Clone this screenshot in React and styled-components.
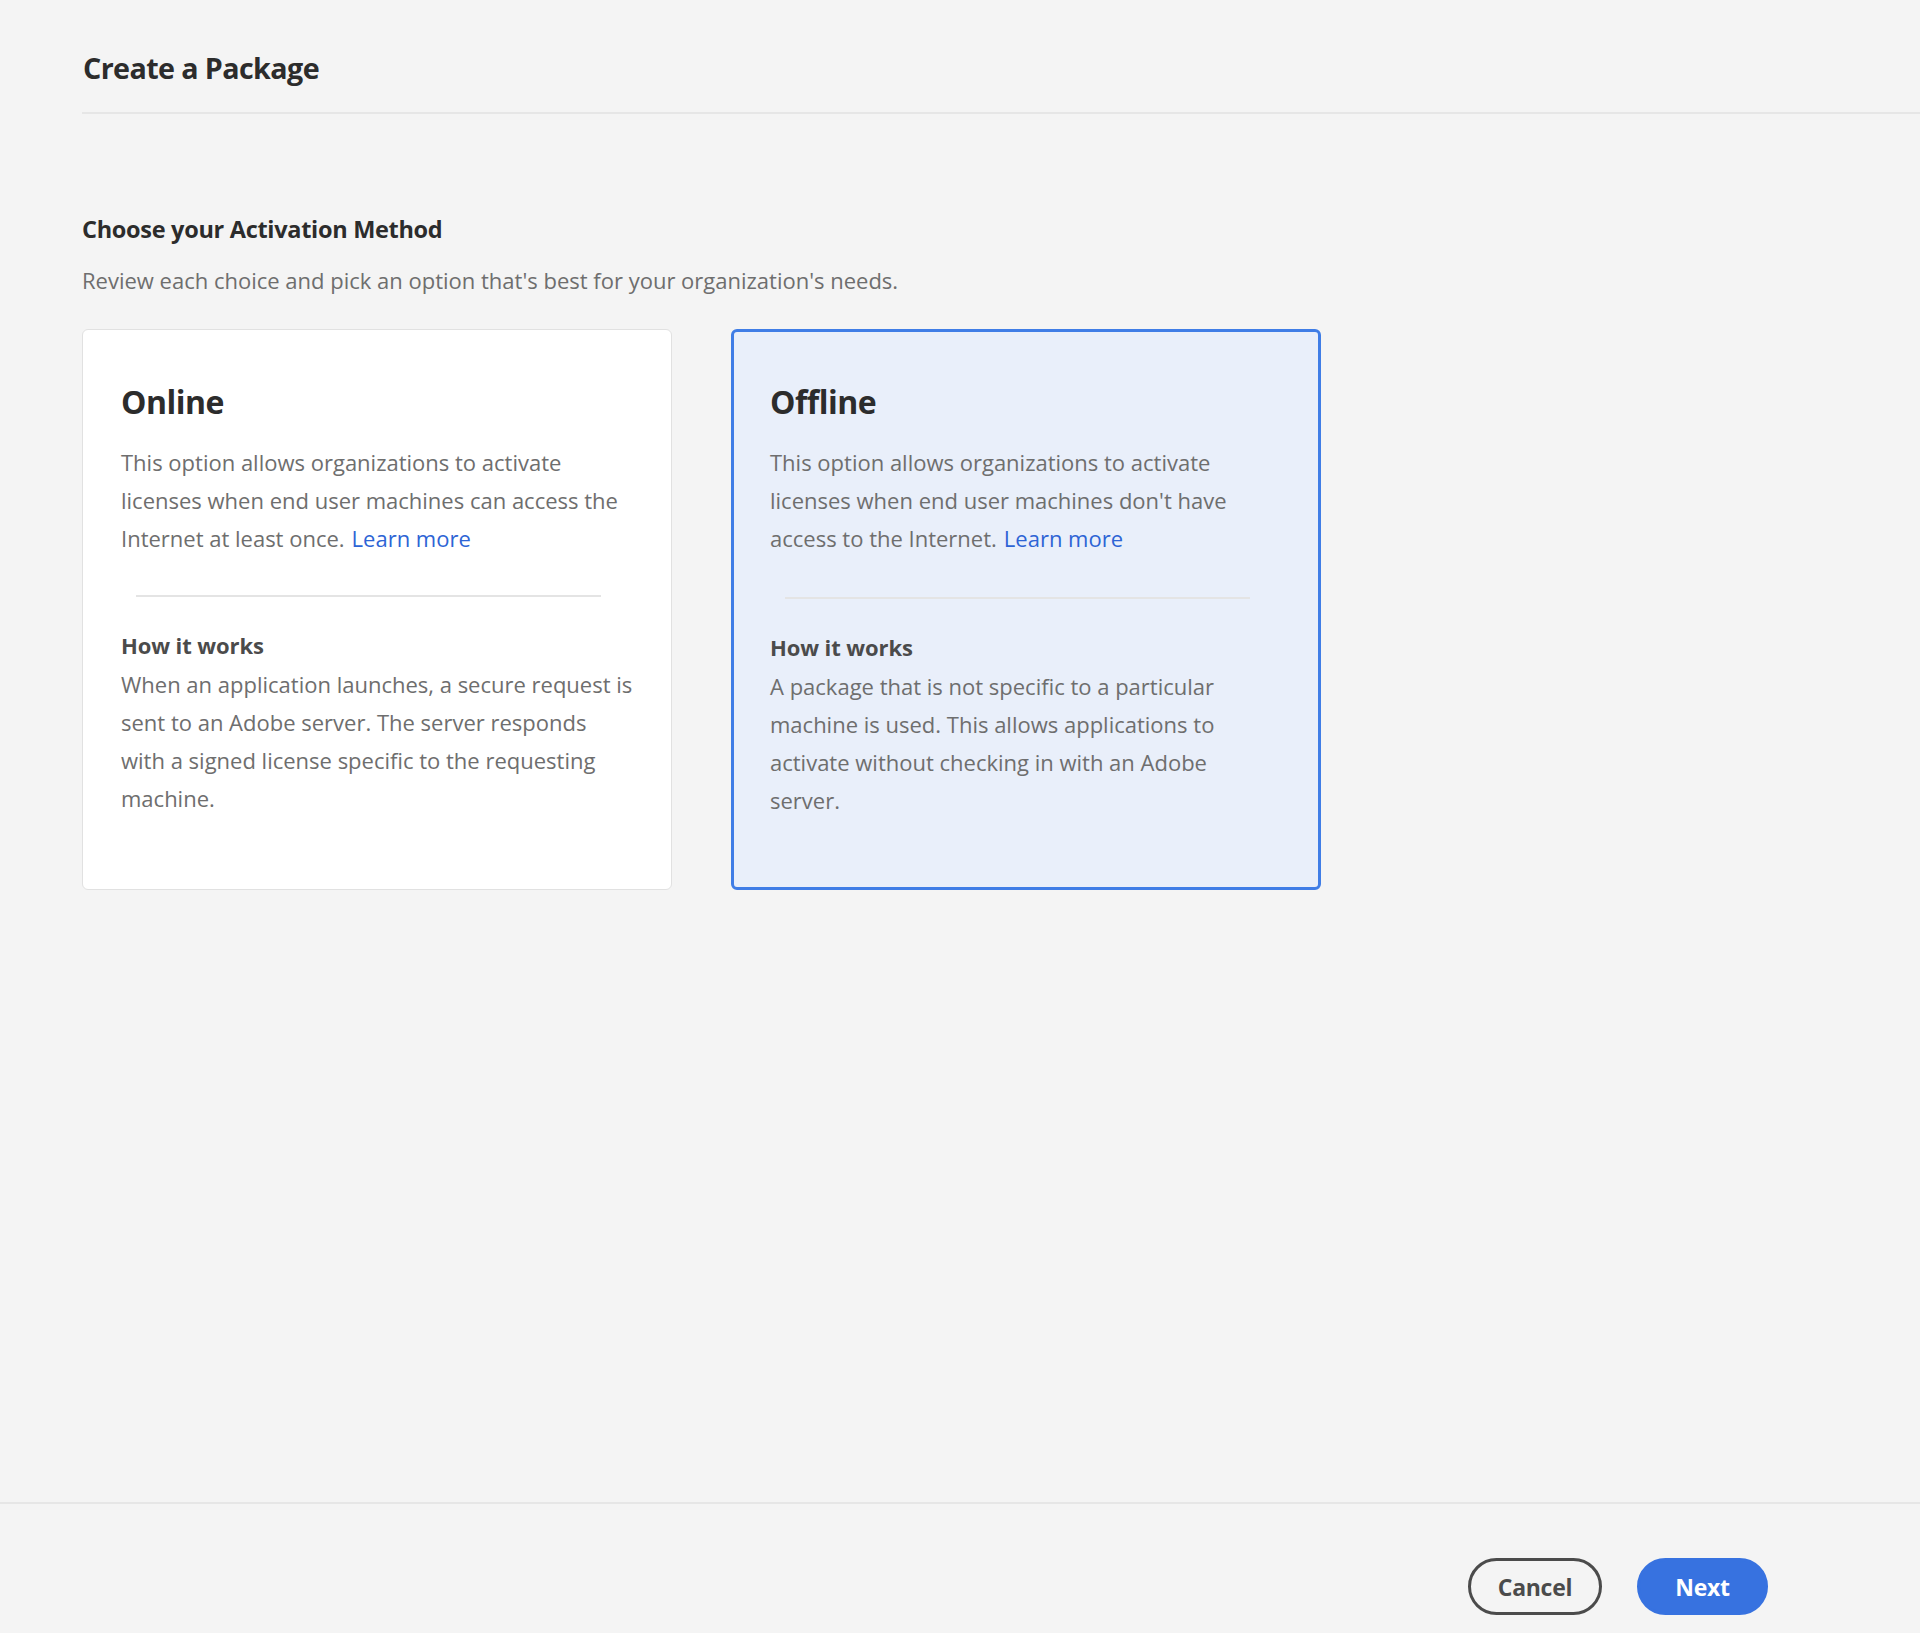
import React from "react";
import styled, { createGlobalStyle } from "styled-components";

const GlobalStyle = createGlobalStyle`
  html, body {
    margin: 0;
    padding: 0;
    background: #f4f4f4;
  }
  body {
    font-family: "Open Sans", "Noto Sans", "Liberation Sans", sans-serif;
    -webkit-font-smoothing: antialiased;
  }
`;

const Page = styled.div`
  min-height: 1633px;
  display: flex;
  flex-direction: column;
  background: #f4f4f4;
`;

const Header = styled.header`
  margin-left: 82px;
  padding-top: 48px;
  height: 64px;
  border-bottom: 2px solid #e6e6e6;
`;

const PageTitle = styled.h1`
  margin: 0;
  padding-left: 1px;
  font-size: 28.7px;
  line-height: 40px;
  font-weight: 700;
  color: #2c2c2c;
  letter-spacing: -0.6px;
`;

const Main = styled.main`
  flex: 1;
  padding: 100px 82px 0;
`;

const SectionTitle = styled.h2`
  margin: 0;
  font-size: 23.5px;
  line-height: 30px;
  font-weight: 700;
  color: #2c2c2c;
  letter-spacing: -0.3px;
`;

const SectionText = styled.p`
  margin: 21px 0 0;
  font-size: 22px;
  line-height: 30px;
  color: #6e6e6e;
`;

const Cards = styled.div`
  display: flex;
  gap: 59px;
  margin-top: 34px;
`;

const Card = styled.div`
  box-sizing: border-box;
  width: 590px;
  height: 561px;
  border-radius: 6px;
  background: ${(props) => (props.selected ? "#e9effa" : "#ffffff")};
  border: ${(props) => (props.selected ? "3px solid #3f7de6" : "1px solid #e1e1e1")};
  padding: ${(props) => (props.selected ? "50px 36px 0" : "52px 38px 0")};
`;

const CardTitle = styled.h3`
  margin: 0;
  font-size: 32px;
  line-height: 40px;
  font-weight: 700;
  color: #2c2c2c;
  letter-spacing: -0.5px;
`;

const CardText = styled.p`
  margin: ${(props) => (props.tight ? "3px 0 0" : "21px 0 0")};
  font-size: 22px;
  line-height: 38px;
  color: #6e6e6e;
  white-space: nowrap;
`;

const Link = styled.a`
  color: #2d64d5;
  text-decoration: none;
  margin-left: 7px;
`;

const Divider = styled.hr`
  border: 0;
  height: 2px;
  background: #e4e4e4;
  width: 465px;
  margin: ${(props) => (props.selected ? "40px 0 0 15px" : "38px 0 0 15px")};
`;

const HowTitle = styled.h4`
  margin: 31px 0 0;
  font-size: 22px;
  line-height: 34px;
  font-weight: 700;
  color: #4b4b4b;
  letter-spacing: -0.1px;
`;

const Footer = styled.footer`
  height: 131px;
  box-sizing: border-box;
  border-top: 2px solid #e6e6e6;
  padding: 54px 152px 0 0;
  display: flex;
  justify-content: flex-end;
  gap: 35px;
`;

const Button = styled.button`
  box-sizing: border-box;
  height: 57px;
  min-width: ${(props) => (props.primary ? "131px" : "134px")};
  padding: 0 24px;
  border-radius: 29px;
  font-family: inherit;
  font-size: 23px;
  font-weight: 700;
  letter-spacing: -0.3px;
  cursor: pointer;
  border: ${(props) => (props.primary ? "3px solid #3772e0" : "3px solid #4b4b4b")};
  background: ${(props) => (props.primary ? "#3772e0" : "transparent")};
  color: ${(props) => (props.primary ? "#ffffff" : "#4b4b4b")};
`;

const options = [
  {
    id: "online",
    title: "Online",
    desc: [
      "This option allows organizations to activate",
      "licenses when end user machines can access the",
      "Internet at least once.",
    ],
    how: [
      "When an application launches, a secure request is",
      "sent to an Adobe server. The server responds",
      "with a signed license specific to the requesting",
      "machine.",
    ],
  },
  {
    id: "offline",
    title: "Offline",
    desc: [
      "This option allows organizations to activate",
      "licenses when end user machines don't have",
      "access to the Internet.",
    ],
    how: [
      "A package that is not specific to a particular",
      "machine is used. This allows applications to",
      "activate without checking in with an Adobe",
      "server.",
    ],
  },
];

const Lines = ({ lines, link }) =>
  lines.map((line, i) => (
    <React.Fragment key={i}>
      {line}
      {i === lines.length - 1 && link && <Link href="#">Learn more</Link>}
      {i < lines.length - 1 && <br />}
    </React.Fragment>
  ));

const OptionCard = ({ option, selected }) => (
  <Card selected={selected}>
    <CardTitle>{option.title}</CardTitle>
    <CardText>
      <Lines lines={option.desc} link />
    </CardText>
    <Divider selected={selected} />
    <HowTitle>How it works</HowTitle>
    <CardText tight>
      <Lines lines={option.how} />
    </CardText>
  </Card>
);

const App = () => {
  const selected = "offline";

  return (
    <Page>
      <GlobalStyle />
      <Header>
        <PageTitle>Create a Package</PageTitle>
      </Header>
      <Main>
        <SectionTitle>Choose your Activation Method</SectionTitle>
        <SectionText>
          Review each choice and pick an option that's best for your
          organization's needs.
        </SectionText>
        <Cards>
          {options.map((option) => (
            <OptionCard
              key={option.id}
              option={option}
              selected={option.id === selected}
            />
          ))}
        </Cards>
      </Main>
      <Footer>
        <Button>Cancel</Button>
        <Button primary>Next</Button>
      </Footer>
    </Page>
  );
};

export default App;
